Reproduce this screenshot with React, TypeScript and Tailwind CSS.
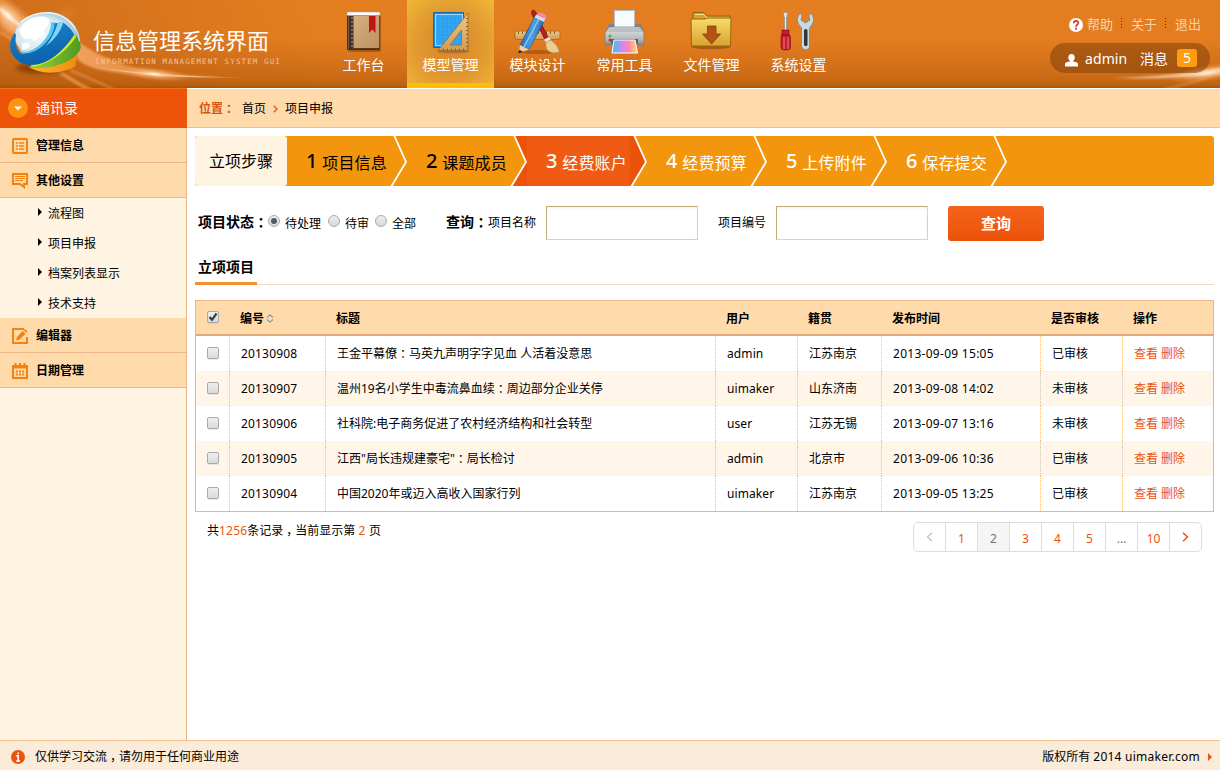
import React from "react";

/* Chinese text with centred full-width punctuation. */
function T({ children }: { children: string }) {
  return (
    <>
      {children.split(/([：，])/).map((part, i) =>
        part === "：" || part === "，" ? (
          <span key={i} className="mx-[0.25em] [font-feature-settings:'halt']">{part}</span>
        ) : (
          part
        )
      )}
    </>
  );
}

function HeaderArt() {
  return (
    <svg className="absolute inset-0" width="1220" height="88" aria-hidden="true">
      <defs>
        <radialGradient id="glow">
          <stop offset="0" stopColor="#fff6e8" />
          <stop offset=".3" stopColor="#ffc890" stopOpacity=".7" />
          <stop offset="1" stopColor="#f09040" stopOpacity="0" />
        </radialGradient>
        <linearGradient id="streak" x1="0" x2="1">
          <stop offset="0" stopColor="#ffd9a8" stopOpacity="0" />
          <stop offset=".45" stopColor="#fff0dc" stopOpacity=".95" />
          <stop offset="1" stopColor="#ffd9a8" stopOpacity="0" />
        </linearGradient>
        <linearGradient id="fade" x1="0" x2="1">
          <stop offset="0" stopColor="#f6a865" stopOpacity=".9" />
          <stop offset="1" stopColor="#f6a865" stopOpacity="0" />
        </linearGradient>
        <linearGradient id="shade" x1="0" x2="1">
          <stop offset="0" stopColor="#a8500f" stopOpacity=".35" />
          <stop offset="1" stopColor="#a8500f" stopOpacity="0" />
        </linearGradient>
        <filter id="soft" x="-20%" y="-20%" width="140%" height="140%"><feGaussianBlur stdDeviation="1.2" /></filter>
        <filter id="soft2" x="-20%" y="-40%" width="140%" height="180%"><feGaussianBlur stdDeviation="4" /></filter>
      </defs>
      <rect width="320" height="88" fill="url(#shade)" />
      <path d="M0 2Q14 12 26 22L20 40Q8 30 0 26Z" fill="#ffc796" opacity=".8" filter="url(#soft2)" />
      <ellipse cx="8" cy="15" rx="30" ry="14" fill="url(#glow)" transform="rotate(40 8 15)" />
      <path d="M0 2Q22 18 38 22T72 10" fill="none" stroke="#ffb878" strokeWidth="4" opacity=".35" filter="url(#soft2)" />
      <path d="M0 8Q14 24 30 30" fill="none" stroke="#fff" strokeWidth="2.500" opacity=".8" filter="url(#soft)" />
      <path d="M0 32Q30 50 58 70T90 90" fill="none" stroke="#f6a865" strokeWidth="3" opacity=".5" filter="url(#soft)" />
      <path d="M76 40Q94 54 122 64T250 78Q150 78 112 72T76 52" fill="url(#fade)" filter="url(#soft)" />
      <path d="M60 74L92 90M70 70L116 90" stroke="#f3a05a" strokeWidth="2" opacity=".55" filter="url(#soft)" />
      <path d="M80 64Q140 76 252 77.500Q150 80 80 64" fill="url(#streak)" />
      <ellipse cx="154" cy="74" rx="38" ry="7" fill="url(#glow)" transform="rotate(6 154 74)" />
      <ellipse cx="1208" cy="73" rx="42" ry="9" fill="url(#glow)" transform="rotate(-8 1208 73)" />
      <path d="M1110 78Q1180 76 1230 66V72Q1180 80 1110 78" fill="#ffe6cc" opacity=".7" filter="url(#soft)" />
      <path d="M1160 90Q1195 84 1225 70" fill="none" stroke="#f8b070" strokeWidth="2" opacity=".4" filter="url(#soft)" />
    </svg>
  );
}

function Logo() {
  return (
    <svg width="76" height="70" viewBox="21 24 228 210" className="block">
      <defs>
        <radialGradient id="globe" cx=".4" cy=".5" r=".62">
          <stop offset="0" stopColor="#f4f9fc" />
          <stop offset=".6" stopColor="#d9e8f1" />
          <stop offset="1" stopColor="#86b3cd" />
        </radialGradient>
        <linearGradient id="lgBlue" x1="0" y1="0" x2=".3" y2="1">
          <stop offset="0" stopColor="#1c84cb" />
          <stop offset="1" stopColor="#0a62ac" />
        </linearGradient>
        <linearGradient id="lgGreen" x1="0" x2="1">
          <stop offset="0" stopColor="#9bd043" />
          <stop offset="1" stopColor="#4a9a20" />
        </linearGradient>
        <linearGradient id="lgOr" x1="0" x2="1">
          <stop offset="0" stopColor="#fbbc2c" />
          <stop offset="1" stopColor="#f28a12" />
        </linearGradient>
        <filter id="drop" x="-20%" y="-80%" width="140%" height="260%"><feGaussianBlur stdDeviation="7" /></filter>
      </defs>
      <ellipse cx="125" cy="204" rx="78" ry="16" fill="#5c2404" opacity=".55" filter="url(#drop)" />
      <path d="M44 120Q40 78 78 54Q108 36 146 36Q188 38 216 66Q236 88 240 120L200 140L70 170Z" fill="url(#globe)" />
      <path d="M58 90Q70 66 96 54Q128 44 146 56Q152 66 140 82Q128 88 132 104Q114 108 104 124Q92 112 84 116Q64 120 58 90M66 132Q86 120 90 138Q80 152 66 150Z" fill="#fff" />
      <path d="M84 200Q150 212 232 164L225 200Q196 216 150 218Q112 216 84 200" fill="url(#lgOr)" />
      <path d="M92 196Q170 176 226 104Q238 112 243 142Q240 160 210 180Q150 212 92 200Z" fill="url(#lgGreen)" />
      <path d="M92 196Q160 176 214 110L226 103L228 112Q178 182 104 200Z" fill="#d3ea22" />
      <path d="M44 98L48 104Q42 140 58 158Q92 162 126 130Q154 100 156 70L190 68Q212 82 223 104Q180 168 130 188Q92 202 62 188Q30 168 30 138Q32 112 44 98" fill="url(#lgBlue)" />
      <path d="M58 158Q96 160 126 130Q152 102 154 67L164 66Q164 102 134 132Q104 162 68 161Z" fill="#5cc8f0" />
      <path d="M174 66L190 68Q178 108 138 138Q164 104 174 66" fill="#7fd6f5" />
      <path d="M62 66Q92 38 146 38Q196 42 226 86" fill="none" stroke="#fff" strokeWidth="4" opacity=".9" />
      <path d="M226 86Q238 104 238 124" fill="none" stroke="#d6ecf7" strokeWidth="3" />
    </svg>
  );
}

const icons: React.ReactNode[] = [
  <g key="book">
    <rect x="28" y="48" width="33" height="4" rx="2" fill="#000" opacity=".25" />
    <rect x="27" y="14" width="33" height="36" rx="1" fill="#3e3027" />
    <rect x="33.500" y="16" width="26" height="33" fill="url(#bookFill)" />
    <rect x="27" y="12" width="33" height="3.500" rx="1" fill="#fafafa" stroke="#a9a19a" strokeWidth=".5" />
    <path d="M32 17V49" stroke="#b8a590" strokeDasharray="2 2" />
    <path d="M28.500 16V49" stroke="#716257" />
    <path d="M49 16H55.500V33L52.200 29.500L49 33Z" fill="#c31218" />
    <path d="M33.500 48.500H60V16" fill="none" stroke="#5f3a1a" />
  </g>,
  <g key="ruler">
    <rect x="26.500" y="12.500" width="30" height="35" fill="#168be0" stroke="#1b68ad" />
    <rect x="28.500" y="14.500" width="27" height="31" fill="#35a7f2" stroke="#9fd8fb" />
    <path d="M32 15V45M36 15V45M40 15V45M44 15V45M48 15V45M52 15V45M29 19H55M29 23H55M29 27H55M29 31H55M29 35H55M29 39H55" stroke="#229ae9" strokeWidth=".6" />
    <ellipse cx="46" cy="51.500" rx="16" ry="1.800" fill="#000" opacity=".2" />
    <path fillRule="evenodd" d="M61 13V50.500H31ZM54.500 30L43 45H54.500Z" fill="url(#wood)" stroke="#9a6a30" strokeWidth=".8" />
    <path d="M60 18V50" stroke="#7c4e1c" strokeDasharray="1 3" strokeWidth="1.500" />
    <path d="M36 49.500H60" stroke="#7c4e1c" strokeDasharray="1 3" strokeWidth="1.500" />
  </g>,
  <g key="design">
    <ellipse cx="43" cy="52" rx="20" ry="2" fill="#000" opacity=".2" />
    <rect x="21" y="31" width="45" height="8.500" rx="2" fill="url(#wood)" stroke="#99602a" strokeWidth=".7" />
    <path d="M24 32.500H64" stroke="#875321" strokeWidth="2.500" strokeDasharray="1 3" />
    <path d="M38.500 10Q42 10 44 17L54.500 38L51 40L41 20Q36 13 38.500 10" fill="#b51f22" stroke="#711113" strokeWidth=".6" />
    <path d="M50 39.500L55 37L57.500 41L52.500 43.500Z" fill="#eee7da" />
    <path d="M52 42L57 40Q64 45 65.500 52Q57 55 52.500 49Q51 45 52 42" fill="#edcc94" stroke="#ac7a3a" strokeWidth=".6" />
    <path d="M41.500 15L51 19.500L35 49.500L26 45Z" fill="url(#pencil)" stroke="#154e8d" strokeWidth=".6" />
    <path d="M46 17L30 47" stroke="#8fc7f1" strokeWidth="1.500" />
    <path d="M40.500 17.500L50 22L51.500 18.500L42.500 14.500Z" fill="#d4dde5" />
    <path d="M42.500 14.500Q45 11 49.500 13.500Q54 16 51.500 19Z" fill="#f18ba2" />
    <path d="M26 45L35 49.500L25 53Z" fill="#efce98" />
    <path d="M25.300 50L29 51.500L24.500 53.500Z" fill="#282326" />
  </g>,
  <g key="printer">
    <path d="M24 33L28 24H60L63 33Z" fill="#7e8387" />
    <rect x="33.500" y="10.500" width="20" height="18" fill="#f9fafb" stroke="#b7bdc2" />
    <path d="M28 27H59L63 33V45H24V33Z" fill="url(#metal)" stroke="#77797e" strokeWidth=".7" />
    <path d="M28 28H59L61 32H26Z" fill="#bbc0c5" />
    <circle cx="29" cy="36" r="1.500" fill="#59b429" />
    <circle cx="29" cy="40" r="1.500" fill="#d82a26" />
    <path d="M30 39H57V44H30Z" fill="#5e6065" />
    <path d="M33 40H54L56.500 53H31Z" fill="url(#rainbow)" stroke="#fff" />
  </g>,
  <g key="folder">
    <ellipse cx="43" cy="47" rx="20" ry="2" fill="#000" opacity=".25" />
    <path d="M25 12.500H36L39 16H62V28H25Z" fill="#d8a129" stroke="#8f6210" />
    <path d="M27 14.500H36L39 18H61" fill="none" stroke="#f7df83" />
    <path d="M23 19H37L40 18H63L62.500 46H23.500Z" fill="url(#folderFill)" stroke="#99680c" />
    <path d="M39.500 26H48V34H52.500L43.500 44L34.500 34H39.500Z" fill="#b35314" stroke="#7d3509" strokeWidth=".7" />
  </g>,
  <g key="tools">
    <path d="M28.500 12.500H32.500L32 17H31.500V31H29.500V17H29Z" fill="#e4e9ec" stroke="#858b90" strokeWidth=".6" />
    <path d="M27 30H34V34L35.500 37V48Q35.500 50 31 50Q26 50 26 48V37L27 34Z" fill="#c61e2c" stroke="#7a0e17" strokeWidth=".6" />
    <path d="M29 37V49M33 37V49" stroke="#ef7a83" />
    <path d="M26 35H35" stroke="#74121b" />
    <path d="M45.500 12.800L47 16L46 20L50.500 23L55 20L54 16L55.500 12.800Q60.500 18 57.500 24L54.500 28V47Q52.500 51 49 49.500Q46.500 48 46.500 46V28L43.500 24Q40.500 18 45.500 12.800" fill="#cad8df" stroke="#7b8c97" strokeWidth=".9" />
    <rect x="49" y="29" width="3.500" height="17" rx="1.500" fill="#32373a" />
  </g>,
];

const nav = ["工作台", "模型管理", "模块设计", "常用工具", "文件管理", "系统设置"];

function IconDefs() {
  return (
    <svg width="0" height="0" className="absolute" aria-hidden="true">
      <defs>
        <linearGradient id="bookFill" x1="0" x2="1" y2="1"><stop stopColor="#d8b081" /><stop offset="1" stopColor="#bd9060" /></linearGradient>
        <linearGradient id="wood" x1="0" y1="0" x2="0" y2="1"><stop stopColor="#edc886" /><stop offset="1" stopColor="#d39b54" /></linearGradient>
        <linearGradient id="pencil" x1="0" y1=".4" x2="1" y2=".6"><stop stopColor="#1d60b0" /><stop offset=".5" stopColor="#4c9fe0" /><stop offset="1" stopColor="#1b5fa8" /></linearGradient>
        <linearGradient id="metal" x1="0" y1="0" x2="0" y2="1"><stop stopColor="#e6e9eb" /><stop offset=".7" stopColor="#b2b6ba" /><stop offset="1" stopColor="#83878c" /></linearGradient>
        <linearGradient id="rainbow" x1="0" x2="1"><stop stopColor="#34c3ee" /><stop offset=".4" stopColor="#c78df0" /><stop offset=".65" stopColor="#ff83b4" /><stop offset="1" stopColor="#ffe159" /></linearGradient>
        <linearGradient id="folderFill" x1="0" y1="0" x2="0" y2="1"><stop stopColor="#f8dc6d" /><stop offset="1" stopColor="#d9a22c" /></linearGradient>
      </defs>
    </svg>
  );
}

function Header() {
  return (
    <header className="relative h-[88px] shrink-0 overflow-hidden bg-[linear-gradient(#e57e20_0%,#e37d20_45%,#cd6c17_85%,#c06310_96%,#a9540b_100%)]">
      <HeaderArt />
      <IconDefs />
      <div className="relative flex h-full">
        <div className="flex w-[320px] pl-[7px] pt-2">
          <Logo />
          <div className="pl-[10px] pt-[16px] text-white">
            <div className="whitespace-nowrap text-[22px] leading-[32px]">信息管理系统界面</div>
            <div className="whitespace-nowrap pl-[2px] pt-[2px] font-['DejaVu_Sans_Mono',monospace] text-[7.5px] leading-[7px] tracking-[1.12px] text-[#f3c298]">INFORMATION MANAGEMENT SYSTEM GUI</div>
          </div>
        </div>
        <nav className="flex">
          {nav.map((label, i) => (
            <a
              key={label}
              className={
                "flex w-[87px] flex-col items-center text-[14px] leading-[20px] text-white " +
                (i === 1 ? "border-b-[5px] border-[#ffbf00] bg-[radial-gradient(ellipse_at_50%_55%,#dc8c2c_25%,#e39c31_60%,#f0b936_100%)]" : "")
              }
            >
              <svg width="87" height="55" className="block shrink-0">{icons[i]}</svg>
              {label}
            </a>
          ))}
        </nav>
        <div className="ml-auto flex w-[180px] flex-col pl-[10px] pt-[15px]">
          <div className="flex h-[18px] items-center pl-[19px] text-[13px] leading-[18px] text-[#fbd3a4]">
            <svg width="14" height="14" viewBox="0 0 14 14" className="mr-1 mt-[2px]">
              <circle cx="7" cy="7" r="7" fill="#fff" />
              <path d="M4.700 5.300Q4.800 3 7.100 3Q9.400 3 9.300 5Q9.200 6.200 7.900 6.900Q7.100 7.400 7.100 8.700" fill="none" stroke="#d3403a" strokeWidth="1.800" />
              <rect x="6.100" y="9.700" width="2" height="2" fill="#d3403a" />
            </svg>
            <span>帮助</span>
            <i className="ml-2 h-3 w-px bg-[repeating-linear-gradient(#5b2a06_0_1px,transparent_1px_3px)]" />
            <span className="ml-[9px]">关于</span>
            <i className="ml-2 h-3 w-px bg-[repeating-linear-gradient(#5b2a06_0_1px,transparent_1px_3px)]" />
            <span className="ml-[9px]">退出</span>
          </div>
          <div className="mt-[10px] flex h-[30px] w-[160px] items-center rounded-full bg-[#7a3c08]/50 pl-[15px] text-[14px] leading-[20px] text-white">
            <svg width="13" height="13" viewBox="0 0 13 13" className="mt-[4px]">
              <ellipse cx="6.500" cy="3.600" rx="3.200" ry="3.600" fill="#fff" />
              <path d="M5 6H8V7.500Q13 8 13 10V12.500H0V10Q0 8 5 7.500Z" fill="#fff" />
            </svg>
            <span className="ml-[7px] w-[42px] pt-px tracking-[0.1px]">admin</span>
            <span className="ml-[13px] pt-px">消息</span>
            <span className="ml-[9px] flex h-[18px] w-5 items-center justify-center rounded-[3px] bg-[#ff9c12]">5</span>
          </div>
        </div>
      </div>
    </header>
  );
}

const sideIcons = {
  list: (
    <g>
      <rect x="1" y="1" width="14" height="14" rx="1" fill="none" stroke="#f5820f" strokeWidth="2" />
      <path d="M4 5H6M7 5H12M4 8H6M7 8H12M4 11H6M7 11H12" stroke="#f5820f" strokeWidth="1.600" />
    </g>
  ),
  chat: (
    <g>
      <path d="M1 1H15V11H12V14L8 11H1Z" fill="none" stroke="#f5820f" strokeWidth="2" />
      <path d="M3 3.500H13M3 5.500H13M3 7.500H11" stroke="#f5820f" />
    </g>
  ),
  edit: (
    <g>
      <path d="M12 1H1V15H15V9" fill="none" stroke="#f5820f" strokeWidth="2" />
      <path d="M4 12.500L5 8.800L10.800 3L13.500 5.700L7.700 11.500ZM11.700 2.200L13 1L15.500 3.500L14.300 4.800Z" fill="#f5820f" />
    </g>
  ),
  cal: (
    <g>
      <path d="M1 3H15V15H1Z" fill="none" stroke="#f5820f" strokeWidth="2" />
      <path d="M0 4H16" stroke="#f5820f" strokeWidth="3" />
      <path d="M3.500 0V3M8 0V3M12.500 0V3" stroke="#f5820f" strokeWidth="2" />
      <path d="M4 8.500H6M7 8.500H9M10 8.500H12M4 11.500H6M7 11.500H9M10 11.500H12" stroke="#f5820f" strokeWidth="2" />
    </g>
  ),
};

function SideItem({ icon, label }: { icon: keyof typeof sideIcons; label: string }) {
  return (
    <div className="flex h-[35px] items-center border-b border-[#ecb586] bg-[#ffdbab] pl-3 text-[12px] font-bold leading-[18px]">
      <svg width="16" height="16" viewBox="0 0 16 16" className="mr-2 mt-px">{sideIcons[icon]}</svg>
      <span className="pt-[2px]">{label}</span>
    </div>
  );
}

function Sidebar() {
  return (
    <aside className="flex w-[187px] shrink-0 flex-col bg-[#fff3e1]">
      <div className="flex h-10 items-center border-t border-[#f8700f] bg-[#ed540a] pb-px pl-2 text-[14px] leading-[20px] text-white">
        <svg width="20" height="20" className="mr-2 block">
          <circle cx="10" cy="10" r="10" fill="#ff930f" />
          <path d="M6 8.500H14L10 12.500Z" fill="#fff" />
        </svg>
        通讯录
      </div>
      <div className="flex-1 border-r border-[#ecb586]">
        <SideItem icon="list" label="管理信息" />
        <SideItem icon="chat" label="其他设置" />
        {["流程图", "项目申报", "档案列表显示", "技术支持"].map((s) => (
          <div key={s} className="flex h-[30px] items-center pl-[38px] text-[12px] leading-[18px]">
            <svg width="4" height="8" className="mr-[6px] mt-[-2px]"><path d="M0 0L4 4L0 8Z" /></svg>
            <span className="pt-[2px]">{s}</span>
          </div>
        ))}
        <SideItem icon="edit" label="编辑器" />
        <SideItem icon="cal" label="日期管理" />
      </div>
    </aside>
  );
}

const steps = ["项目信息", "课题成员", "经费账户", "经费预算", "上传附件", "保存提交"];

function Steps() {
  return (
    <div className="flex h-[50px] overflow-hidden rounded-[3px] bg-[#f3960e]">
      <div className="flex w-[92px] items-center justify-center rounded-[3px] bg-[#fff3e1] text-[16px] leading-[24px]">立项步骤</div>
      {steps.map((s, i) => (
        <div key={s} className={"flex w-[120px] items-center " + (i === 2 ? "bg-[#ef5b12]" : "")}>
          <div className={"flex w-[100px] shrink-0 items-center whitespace-nowrap pl-[19px] " + (i > 1 ? "text-white" : "text-black")}>
            <span className="w-[18px] text-[20px] font-medium leading-[24px]">{i + 1}</span>
            <span className="mt-[3px] text-[16px] leading-[24px] tracking-[0.2px]">{s}</span>
          </div>
          <svg width="20" height="50" className="block shrink-0">
            {i === 1 && <path d="M7 0H20V50H4L19.500 26Z" fill="#ea5309" />}
            {i === 2 && <path d="M3 0H20V50H3Z" fill="#ea5309" />}
            {i === 2 && <path d="M7 0H20V50H4L19.500 26Z" fill="#f3960e" />}
            <path d="M7 -1L19 26L4 51" fill="none" stroke="#fff" strokeWidth="1.800" />
          </svg>
        </div>
      ))}
    </div>
  );
}

function Radio({ label, on }: { label: string; on?: boolean }) {
  return (
    <label className="flex items-center">
      <span className="mt-[-3px] flex h-3 w-3 items-center justify-center rounded-full border border-[#aaa] bg-linear-to-b from-[#eee] to-[#d8d8d8]">
        {on && <span className="h-[6px] w-[6px] rounded-full bg-[#5a5a5a]" />}
      </span>
      <span className="ml-[5px] mt-[2px]">{label}</span>
    </label>
  );
}

function Check({ on }: { on?: boolean }) {
  return (
    <span className="flex h-3 w-3 items-center justify-center rounded-[2px] border border-[#a9a9a9] bg-linear-to-b from-[#efefef] to-[#dadada] shadow-[0_1px_0_rgba(0,0,0,0.08)]">
      {on && (
        <svg width="10" height="10" className="shrink-0"><path d="M1.500 5L4 7.800L8.500 1.500" fill="none" stroke="#3c3c3c" strokeWidth="2.200" /></svg>
      )}
    </span>
  );
}

function SearchForm() {
  const input = "h-[34px] w-[152px] border border-[#c3ab7c] border-b-[#dfd3b6] border-r-[#dfd3b6] bg-white shadow-[inset_0_2px_3px_#f6f6f6]";
  return (
    <div className="mt-5 flex h-[35px] items-start pl-[3px] text-[12px] leading-[18px]">
      <div className="flex h-[33px] items-center">
        <b className="w-[70px] whitespace-nowrap pb-px text-[14px]"><T>项目状态：</T></b>
        <Radio label="待处理" on />
        <span className="w-[7px]" />
        <Radio label="待审" />
        <span className="w-[6px]" />
        <Radio label="全部" />
        <b className="ml-[30px] w-[42px] whitespace-nowrap pb-px text-[14px]"><T>查询：</T></b>
        <span>项目名称</span>
      </div>
      <input className={"ml-[10px] " + input} />
      <span className="ml-5 w-12 leading-[33px]">项目编号</span>
      <input className={"ml-[10px] " + input} />
      <button className="ml-5 h-[35px] w-24 rounded-[3px] bg-linear-to-b from-[#f5641b] to-[#eb5207] pb-[2px] text-[15px] font-bold text-white">查询</button>
    </div>
  );
}

const rows = [
  ["20130908", "王金平幕僚：马英九声明字字见血 人活着没意思", "admin", "江苏南京", "2013-09-09 15:05", "已审核"],
  ["20130907", "温州19名小学生中毒流鼻血续：周边部分企业关停", "uimaker", "山东济南", "2013-09-08 14:02", "未审核"],
  ["20130906", "社科院:电子商务促进了农村经济结构和社会转型", "user", "江苏无锡", "2013-09-07 13:16", "未审核"],
  ["20130905", "江西\"局长违规建豪宅\"：局长检讨", "admin", "北京市", "2013-09-06 10:36", "已审核"],
  ["20130904", "中国2020年或迈入高收入国家行列", "uimaker", "江苏南京", "2013-09-05 13:25", "已审核"],
];

const cellTracking = ["tracking-[0.17px]", "", "tracking-[0.1px]", "", "tracking-[0.28px]", ""];

const cols = "grid grid-cols-[34px_96px_390px_82px_84px_159px_82px_90px]";

function Table() {
  return (
    <div className="mt-[15px] border border-[#ecb586] text-[12px]">
      <div className={cols + " h-[35px] items-center border-b-2 border-b-[#e0a878] bg-[#ffdbab] font-bold leading-[18px]"}>
        <div className="pb-px pl-[11px]"><Check on /></div>
        <div className="flex items-center pl-[10px] pt-[2px]">
          编号
          <svg width="8" height="9" className="ml-[2px]"><path d="M1 3.500L4 .8L7 3.500M1 5.500L4 8.200L7 5.500" fill="none" stroke="#8799a3" strokeWidth="1.100" /></svg>
        </div>
        {["标题", "用户", "籍贯", "发布时间", "是否审核", "操作"].map((h) => (
          <div key={h} className="pl-[10px] pt-[2px]">{h}</div>
        ))}
      </div>
      {rows.map((r, n) => (
        <div key={r[0]} className={cols + " h-[35px] leading-[35px] " + (n % 2 ? "bg-[#fff6e9]" : "bg-white")}>
          <div className="flex items-center border-r border-dotted border-[#edbe7c] pb-px pl-[11px]"><Check /></div>
          {r.map((c, k) => (
            <div key={k} className={"whitespace-nowrap border-r border-dotted border-[#edbe7c] pl-[11px] " + cellTracking[k]}>
              <T>{c}</T>
            </div>
          ))}
          <div className="pl-[11px] text-[#ea5413]">查看 删除</div>
        </div>
      ))}
    </div>
  );
}

function Pager() {
  const cell = "flex w-8 shrink-0 items-center justify-center border-r border-[#ddd]";
  return (
    <div className="flex items-start justify-between pl-3 pr-3 pt-[10px] text-[12px]">
      <div className="leading-[18px]">
        <T>共</T><span className="text-[#ea5413] tracking-[0.2px]">1256</span><T>条记录，当前显示第</T> <span className="text-[#ea5413] tracking-[0.5px]">2</span> 页
      </div>
      <div className="flex h-[30px] w-[289px] overflow-hidden rounded-[5px] border border-[#ddd] text-[#ea5413]">
        <span className={cell}><svg width="7" height="10"><path d="M6 .7L1.500 5L6 9.300" fill="none" stroke="#c3c3c3" strokeWidth="1.300" /></svg></span>
        {["1", "2", "3", "4", "5", "...", "10"].map((p) => (
          <span key={p} className={cell + " pt-[3px] " + (p === "2" ? "bg-[#f5f5f5] text-[#737373]" : p === "..." ? "text-[#737373]" : "")}>{p}</span>
        ))}
        <span className="flex flex-1 items-center justify-center"><svg width="7" height="10"><path d="M1 .7L5.500 5L1 9.300" fill="none" stroke="#ea5413" strokeWidth="1.500" /></svg></span>
      </div>
    </div>
  );
}

export default function App() {
  return (
    <div className="flex h-[770px] w-[1220px] flex-col overflow-hidden bg-white font-['Noto_Sans','Noto_Sans_CJK_SC',sans-serif] text-black">
      <Header />
      <div className="flex min-h-0 flex-1">
        <Sidebar />
        <main className="flex-1">
          <div className="flex h-10 items-center border-b border-t border-b-[#f2bd8e] border-t-white bg-[#ffdbab] pl-3 pt-[2px] text-[12px] leading-[18px]">
            <b className="w-[43px] whitespace-nowrap text-[#d9540c]"><T>位置：</T></b>
            <span>首页</span>
            <svg width="5" height="8" className="mx-[7px]"><path d="M.7 .7L4 4L.7 7.300" fill="none" stroke="#ea5413" strokeWidth="1.300" /></svg>
            <span>项目申报</span>
          </div>
          <div className="pl-2 pr-[6px] pt-2">
            <Steps />
            <SearchForm />
            <div className="mt-[9px] flex h-[35px] border-b border-[#eedcc0]">
              <div className="flex h-[35px] w-[62px] justify-center border-b-[3px] border-[#f68e30] pt-[7px] text-[14px] font-bold leading-[20px]">立项项目</div>
            </div>
            <Table />
            <Pager />
          </div>
        </main>
      </div>
      <footer className="flex h-[30px] shrink-0 items-center border-t border-[#f0be90] bg-[#faecd8] pl-[11px] pr-2 pt-[2px] text-[12px] leading-[18px]">
        <svg width="14" height="14" className="mr-[10px]">
          <circle cx="7" cy="7" r="7" fill="#ea540c" />
          <path d="M5.200 5.800H7.200V11M5.200 11H9M7.200 2.500V4.300" fill="none" stroke="#fff" strokeWidth="1.600" />
        </svg>
        <span><T>仅供学习交流，请勿用于任何商业用途</T></span>
        <span className="ml-auto">版权所有 <span className="tracking-[0.25px]">2014 uimaker.com</span></span>
        <svg width="4" height="8" className="ml-2"><path d="M0 0L4 4L0 8Z" fill="#ea5413" /></svg>
      </footer>
    </div>
  );
}
